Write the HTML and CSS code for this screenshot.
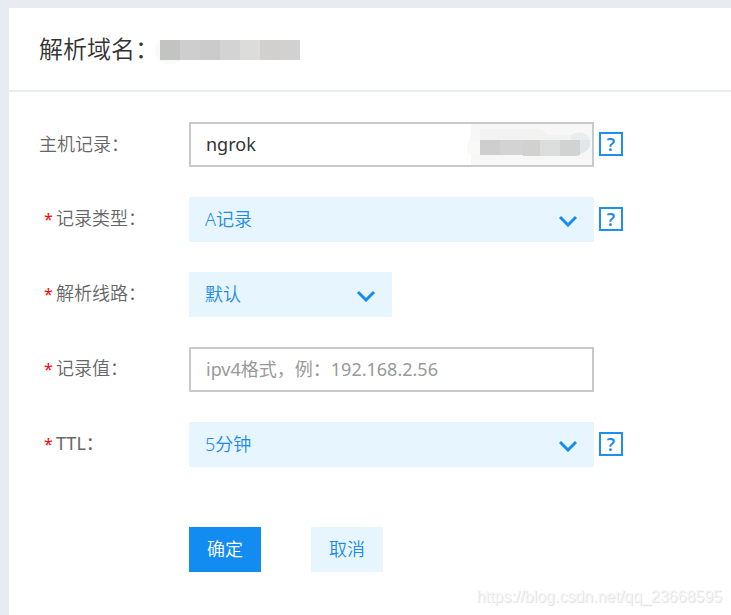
FILE: index.html
```html
<!DOCTYPE html>
<html lang="zh-CN">
<head>
<meta charset="utf-8">
<meta name="viewport" content="width=device-width, initial-scale=1">
<title>解析域名</title>
<link rel="stylesheet" href="styles.css">
</head>
<body>
<main class="panel">
  <header class="panel-header">
    <h1 class="title">解析域名：</h1>
    <svg class="masked-domain" width="146" height="32" viewBox="0 0 146 32" aria-hidden="true">
      <path fill="#f9fafa" d="M6 7Q1 9 1 17Q1 25 5 27Q8 32 14 31L26 30V7z"/>
      <path fill="#c3c3c2" d="M6 7h20v20H6z"/>
      <path fill="#cecece" d="M26 7h20v20H26z"/>
      <path fill="#cbcbcb" d="M46 7h20v20H46z"/>
      <path fill="#d3d3d3" d="M66 7h20v20H66z"/>
      <path fill="#dcdcda" d="M86 7h20v20H86z"/>
      <path fill="#d1d0ce" d="M106 7h20v20h-20z"/>
      <path fill="#d1d1d2" d="M126 7h20v20h-20z"/>
    </svg>
  </header>

  <form class="form">
    <div class="row">
      <label class="label" for="host">主机记录：</label>
      <div class="control">
        <input class="field" id="host" type="text" value="ngrok">
        <svg class="masked-suffix" width="125" height="41" viewBox="0 0 125 41" aria-hidden="true">
          <path fill="#f7f7f7" d="M4 0h122v41H4z"/>
          <path fill="#f9f9f8" d="M4 10Q2 14 2 18Q0 20 0 25Q0 30 6 31h7V17H4z"/>
          <path fill="#f2f2f2" d="M13 5h58q6 0 9 6h24v5H13z"/>
          <path fill="#eaecee" d="M104 11q6-4 12-2q6 2 7 7h-19z"/>
          <path fill="#cdcecd" d="M13 16h20v15H13z"/>
          <path fill="#d3d3d3" d="M33 16h23v15H33z"/>
          <path fill="#d1d1d0" d="M56 16h17v16H56z"/>
          <path fill="#dcdedd" d="M73 16h20v16H73z"/>
          <path fill="#d1d3d2" d="M93 16h20v15l-4 1H93z"/>
          <path fill="#e0e6eb" d="M113 16h10q2 10-10 14z"/>
        </svg>
      </div>
      <button class="help" type="button" aria-label="主机记录帮助">?</button>
    </div>

    <div class="row">
      <label class="label" for="type"><span class="required">*</span>记录类型：</label>
      <div class="control">
        <select class="select" id="type"><option>A记录</option></select>
        <svg class="chevron" width="18" height="12" viewBox="0 0 18 12" aria-hidden="true"><path d="M1 2l8 8 8-8"/></svg>
      </div>
      <button class="help" type="button" aria-label="记录类型帮助">?</button>
    </div>

    <div class="row">
      <label class="label" for="line"><span class="required">*</span>解析线路：</label>
      <div class="control control-half">
        <select class="select" id="line"><option>默认</option></select>
        <svg class="chevron" width="18" height="12" viewBox="0 0 18 12" aria-hidden="true"><path d="M1 2l8 8 8-8"/></svg>
      </div>
    </div>

    <div class="row">
      <label class="label" for="value"><span class="required">*</span>记录值：</label>
      <div class="control">
        <input class="field" id="value" type="text" placeholder="ipv4格式，例：192.168.2.56">
      </div>
    </div>

    <div class="row">
      <label class="label label-latin" for="ttl"><span class="required">*</span>TTL：</label>
      <div class="control">
        <select class="select" id="ttl"><option>5分钟</option></select>
        <svg class="chevron" width="18" height="12" viewBox="0 0 18 12" aria-hidden="true"><path d="M1 2l8 8 8-8"/></svg>
      </div>
      <button class="help" type="button" aria-label="TTL帮助">?</button>
    </div>

    <div class="actions">
      <button class="button button-primary" type="submit">确定</button>
      <button class="button" type="button">取消</button>
    </div>
  </form>
  <div class="watermark">https://blog.csdn.net/qq_23668595</div>
</main>
</body>
</html>
```
FILE: styles.css
```css
* {
  box-sizing: border-box;
}

body {
  margin: 0;
  padding: 8px 0 0 9px;
  min-height: 100vh;
  display: flex;
  background: #e8ebf0;
  color: #666;
  font: 350 18px/24px "Noto Sans", "Noto Sans CJK SC", sans-serif;
}

.panel {
  position: relative;
  flex: 1;
  background: #fff;
}

.panel-header {
  display: flex;
  align-items: center;
  height: 84px;
  padding-left: 30px;
  border-bottom: 2px solid #e8ebf0;
}

.title {
  margin: 0;
  width: 115px;
  white-space: nowrap;
  color: #333;
  font-size: 24px;
  font-weight: 350;
  line-height: 32px;
}

.form {
  display: grid;
  gap: 30px;
  padding: 30px;
}

.row {
  display: grid;
  grid-template-columns: 150px minmax(0, 405px) 24px;
  align-items: center;
}

.label {
  padding-bottom: 2px;
  white-space: nowrap;
}

.label-latin {
  font-weight: 400;
}

.required {
  display: inline-block;
  width: 17px;
  padding-left: 5px;
  color: #f00;
  font-size: 16px;
  font-weight: 400;
}

.control {
  position: relative;
  display: flex;
}

.control-half {
  width: 50%;
}

.field,
.select {
  width: 100%;
  height: 45px;
  margin: 0;
  border-radius: 0;
  font: inherit;
}

.field {
  padding: 0 15px 2px;
  border: 2px solid #c9c9c9;
  background: #fff;
  color: #333;
  font-weight: 400;
}

.field::placeholder {
  color: #999;
  opacity: 1;
}

.select {
  appearance: none;
  padding: 0 40px 2px 16px;
  border: 0;
  background: #e7f5fe;
  color: #1e8bea;
}

.masked-suffix {
  position: absolute;
  top: 2px;
  right: 2px;
}

.chevron {
  position: absolute;
  top: 18px;
  right: 17px;
  fill: none;
  stroke: #168cee;
  stroke-width: 3;
  pointer-events: none;
}

.help {
  width: 24px;
  height: 24px;
  margin: 0 0 2px 5px;
  padding: 0;
  border: 2px solid #1e8fec;
  background: #fff;
  color: #1e8bea;
  font: 600 18px/20px "Noto Sans", sans-serif;
}

.actions {
  display: flex;
  gap: 50px;
  padding: 30px 0 0 150px;
}

.button {
  width: 72px;
  height: 45px;
  padding: 0 0 2px;
  border: 0;
  background: #e7f5fe;
  color: #1e8bea;
  font: inherit;
}

.button-primary {
  background: #128cf0;
  color: #fff;
}

.watermark {
  position: absolute;
  right: 9px;
  bottom: 6px;
  color: #f6f6f6;
  font: 400 16px/24px "Liberation Sans", sans-serif;
  text-shadow: 1px 1px 0 #e4e4e4;
}
```
